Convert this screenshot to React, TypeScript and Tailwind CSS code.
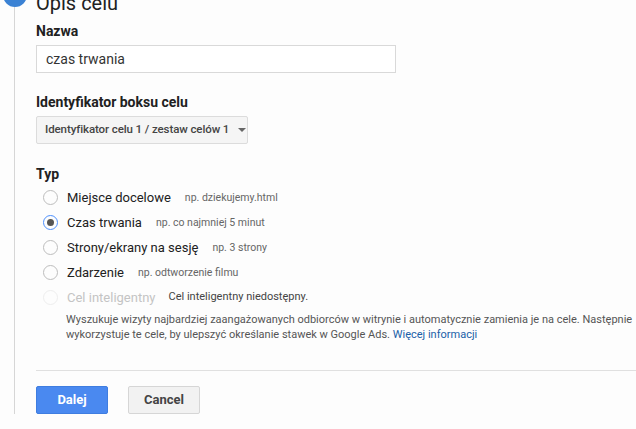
import React from 'react';

const options = [
  { label: 'Miejsce docelowe', hint: 'np. dziekujemy.html', checked: false },
  { label: 'Czas trwania', hint: 'np. co najmniej 5 minut', checked: true },
  { label: 'Strony/ekrany na sesję', hint: 'np. 3 strony', checked: false },
  { label: 'Zdarzenie', hint: 'np. odtworzenie filmu', checked: false },
];

const Radio = ({ checked, disabled }: { checked?: boolean; disabled?: boolean }) => (
  <span
    className={
      'flex h-[15px] w-[15px] shrink-0 items-center justify-center rounded-full border ' +
      (checked ? 'border-[#4d90fe]' : disabled ? 'border-[#eeeeee]' : 'border-[#bdbdbd]')
    }
  >
    {checked && <span className="h-[7px] w-[7px] rounded-full bg-[#555]" />}
  </span>
);

export default function App() {
  return (
    <div className="relative h-[429px] w-[636px] overflow-hidden bg-[#fdfdfd] font-['Roboto',sans-serif] text-[#212121]">
      {/* step rail */}
      <div className="absolute left-[14px] top-0 h-[414px] w-px bg-[#d6d6d6]" />
      <div className="absolute left-[3px] top-[-17px] flex h-6 w-6 items-end justify-center rounded-full bg-[#3b82d4] pb-[2px] text-[13px] text-white">
        2
      </div>

      <div className="pl-9">
        <div className="mt-[-9px] text-[20px] leading-6 text-[#212121]">Opis celu</div>

        <div className="mt-[8px] text-[14px] font-bold leading-4">Nazwa</div>
        <div className="mt-[6px] flex h-[28px] w-[360px] items-center border border-[#d9d9d9] bg-white px-[9px] text-[14px] text-[#333]">
          czas trwania
        </div>

        <div className="mt-[21px] text-[14px] font-bold leading-4">Identyfikator boksu celu</div>
        <div className="mt-[6px] flex h-[28px] w-[212px] items-center gap-[9px] whitespace-nowrap rounded-[2px] border border-[#dcdcdc] bg-[#f5f5f5] pl-[8px] text-[11.5px] font-medium tracking-[-0.1px] text-[#444]">
          Identyfikator celu 1 / zestaw celów 1
          <span className="h-0 w-0 border-x-4 border-t-4 border-x-transparent border-t-[#666]" />
        </div>

        <div className="mt-[22px] text-[14px] font-bold leading-4">Typ</div>
        <div className="mt-[3px] flex flex-col">
          {options.map((o) => (
            <div key={o.label} className="flex h-[25px] items-center pl-[7px]">
              <Radio checked={o.checked} />
              <span className="ml-[9px] text-[13px] text-[#212121]">{o.label}</span>
              <span className="ml-[14px] text-[10.5px] text-[#666]">{o.hint}</span>
            </div>
          ))}
          <div className="flex h-[25px] items-center pl-[7px]">
            <Radio disabled />
            <span className="ml-[9px] text-[13px] text-[#c4c4c4]">Cel inteligentny</span>
            <span className="ml-[13px] text-[11px] text-[#444]">Cel inteligentny niedostępny.</span>
          </div>
        </div>
        <p className="ml-[30px] mt-[2px] w-[570px] text-[11px] leading-[15px] text-[#555]">
          Wyszukuje wizyty najbardziej zaangażowanych odbiorców w witrynie i automatycznie zamienia je na cele. Następnie
          wykorzystuje te cele, by ulepszyć określanie stawek w Google Ads. <span className="text-[#1a5fa8]">Więcej informacji</span>
        </p>

        <div className="mt-[28px] h-px w-full bg-[#e0e0e0]" />

        <div className="mt-[15px] flex gap-5">
          <button className="h-[28px] w-[72px] rounded-[2px] border border-[#3f7de0] bg-[#4a89f0] text-[13px] font-bold text-white">
            Dalej
          </button>
          <button className="h-[28px] w-[72px] rounded-[2px] border border-[#d6d6d6] bg-[#f2f2f2] text-[13px] font-bold text-[#444]">
            Cancel
          </button>
        </div>
      </div>
    </div>
  );
}
